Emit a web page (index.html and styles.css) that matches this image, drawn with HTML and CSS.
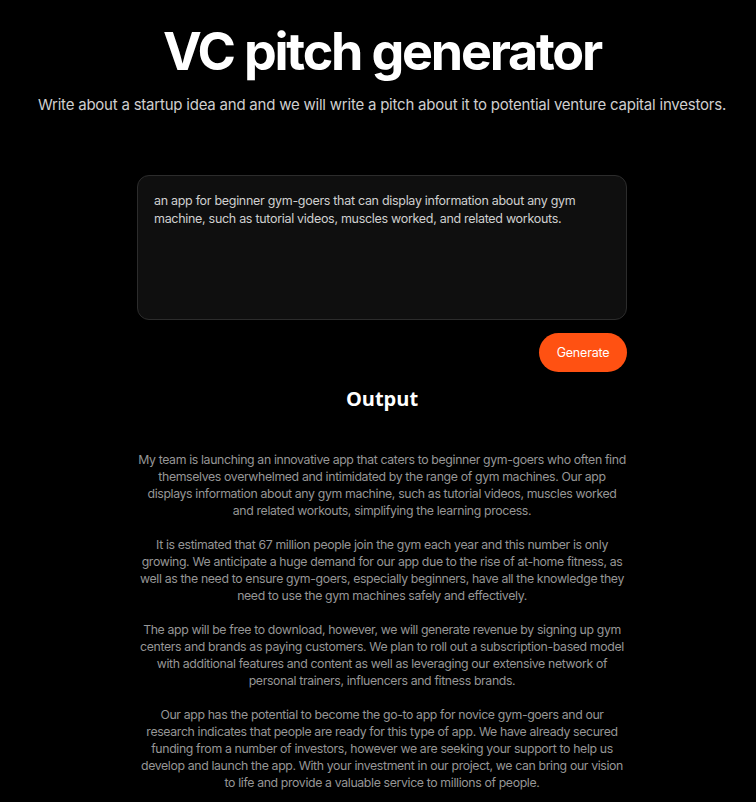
FILE: index.html
```
<!DOCTYPE html>
<html lang="en">
<head>
<meta charset="utf-8">
<title>VC pitch generator</title>
<link rel="stylesheet" href="styles.css">
</head>
<body>
<main class="page">
  <h1 class="title">VC pitch generator</h1>
  <p class="subtitle">Write about a startup idea and and we will write a pitch about it to potential venture capital investors.</p>
  <div class="form">
    <div class="input">an app for beginner gym-goers that can display information about any gym machine, such as tutorial videos, muscles worked, and related workouts.</div>
    <div class="actions"><button class="btn">Generate</button></div>
  </div>
  <h2 class="out-title">Output</h2>
  <div class="output">
    <p>My team is launching an innovative app that caters to beginner gym-goers who often find themselves overwhelmed and intimidated by the range of gym machines. Our app displays information about any gym machine, such as tutorial videos, muscles worked and related workouts, simplifying the learning process.</p>
    <p>It is estimated that 67 million people join the gym each year and this number is only growing. We anticipate a huge demand for our app due to the rise of at-home fitness, as well as the need to ensure gym-goers, especially beginners, have all the knowledge they need to use the gym machines safely and effectively.</p>
    <p>The app will be free to download, however, we will generate revenue by signing up gym centers and brands as paying customers. We plan to roll out a subscription-based model with additional features and content as well as leveraging our extensive network of personal trainers, influencers and fitness brands.</p>
    <p>Our app has the potential to become the go-to app for novice gym-goers and our research indicates that people are ready for this type of app. We have already secured funding from a number of investors, however we are seeking your support to help us develop and launch the app. With your investment in our project, we can bring our vision to life and provide a valuable service to millions of people.</p>
  </div>
</main>
</body>
</html>
```
FILE: styles.css
```
html, body {
  margin: 0;
  padding: 0;
  background: #000;
}
body {
  font-family: Inter, "Noto Sans", sans-serif;
  color: #fff;
}
.page {
  display: flex;
  flex-direction: column;
  align-items: center;
  padding-top: 22px;
  padding-left: 8px;
}
.title {
  margin: 0;
  font-size: 52px;
  line-height: 60px;
  font-weight: 700;
  letter-spacing: -2.2px;
  color: #fff;
}
.subtitle {
  margin: 13px 0 0;
  font-size: 15px;
  line-height: 20px;
  color: #cfcfcf;
  letter-spacing: -0.22px;
}
.form {
  width: 490px;
  margin-top: 60px;
  display: flex;
  flex-direction: column;
}
.input {
  box-sizing: border-box;
  height: 145px;
  padding: 16px 16px;
  background: #0f0f0f;
  border: 1px solid #2c2c2c;
  border-radius: 12px;
  font-size: 12.5px;
  line-height: 18px;
  color: #cfcfcf;
  letter-spacing: -0.3px;
}
.actions {
  display: flex;
  justify-content: flex-end;
  margin-top: 13px;
}
.btn {
  width: 88px;
  height: 39px;
  border: none;
  border-radius: 20px;
  background: #ff5112;
  color: #fff;
  font-family: Inter, sans-serif;
  font-size: 12.5px;
  letter-spacing: -0.2px;
}
.out-title {
  margin: 13px 0 0;
  font-family: "Open Sans", sans-serif;
  font-size: 20px;
  line-height: 28px;
  font-weight: 700;
}
.output {
  width: 491px;
  margin-top: 38px;
  text-align: center;
  font-size: 12.3px;
  line-height: 17px;
  color: #969696;
  letter-spacing: -0.36px;
}
.output p {
  margin: 0 0 17px;
}
```
